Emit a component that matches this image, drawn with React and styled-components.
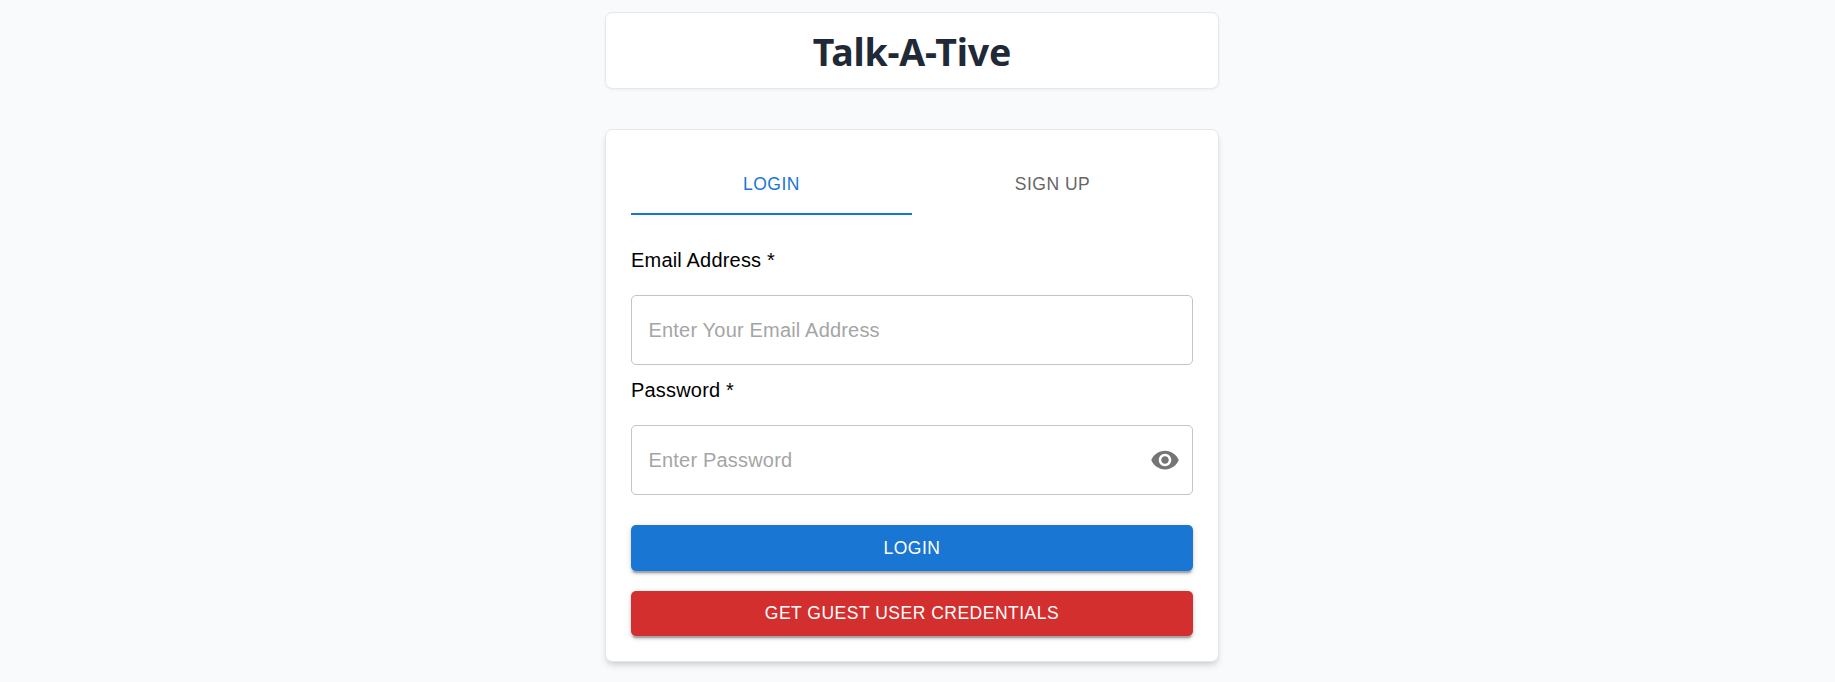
import React, { useState } from "react";
import styled, { createGlobalStyle } from "styled-components";

const GlobalStyle = createGlobalStyle`
  * { box-sizing: border-box; }
  body {
    margin: 0;
    background: #f9fafc;
    font-family: "Liberation Sans", Arial, sans-serif;
    overflow: hidden;
  }
`;

const Page = styled.main`
  min-height: 682px;
  padding: 12px 0 20px 605px;
`;

const Column = styled.div`
  width: 614px;
  display: flex;
  flex-direction: column;
  gap: 40px;
`;

const Panel = styled.section`
  background: #fff;
  border: 1px solid #e5e7eb;
  border-radius: 7.5px;
`;

const Header = styled(Panel)`
  height: 77px;
  display: flex;
  align-items: center;
  justify-content: center;
  box-shadow: 0 1px 3px rgba(0, 0, 0, 0.05);
`;

const Title = styled.h1`
  margin: 0;
  padding-top: 2px;
  font: 700 37.5px/45px "Noto Sans", "Open Sans", sans-serif;
  letter-spacing: -0.2px;
  color: #1f2937;
`;

const Card = styled(Panel)`
  height: 533px;
  padding: 25px;
  box-shadow: 0 5px 7.5px -1px rgba(0, 0, 0, 0.1), 0 2.5px 5px -2px rgba(0, 0, 0, 0.1);
`;

const Tabs = styled.div`
  display: flex;
  height: 60px;
`;

const Tab = styled.button`
  flex: 1;
  padding: 0 0 1px;
  border: 0;
  border-bottom: 2px solid ${(p) => (p.$active ? "#1976d2" : "transparent")};
  background: none;
  color: ${(p) => (p.$active ? "#1976d2" : "#666")};
  font: 400 17.5px/22px "Liberation Sans", Arial, sans-serif;
  letter-spacing: 0.02857em;
  text-transform: uppercase;
`;

const Form = styled.form`
  display: flex;
  flex-direction: column;
  padding-top: 30px;
`;

const Field = styled.div`
  display: flex;
  flex-direction: column;
  gap: 20px;
  margin-bottom: 10px;
`;

const Label = styled.label`
  font-size: 20px;
  line-height: 30px;
  letter-spacing: 0.00938em;
  color: #000;
`;

const InputBox = styled.div`
  height: 70px;
  display: flex;
  align-items: center;
  padding: 0 12px 0 16.5px;
  border: 1px solid #c4c4c4;
  border-radius: 5px;
`;

const Input = styled.input`
  flex: 1;
  min-width: 0;
  height: 29px;
  padding: 0;
  border: 0;
  outline: 0;
  background: none;
  font: 400 20px/29px "Liberation Sans", Arial, sans-serif;
  letter-spacing: 0.00938em;

  &::placeholder {
    color: #a5a5a5;
    opacity: 1;
  }
`;

const IconButton = styled.button`
  display: flex;
  padding: 0;
  border: 0;
  background: none;
  color: #757575;
`;

const Actions = styled.div`
  display: flex;
  flex-direction: column;
  gap: 20px;
  padding-top: 20px;
`;

const Button = styled.button`
  height: ${(p) => p.$height}px;
  padding: 0 0 ${(p) => p.$height % 2}px;
  border: 0;
  border-radius: 5px;
  background: ${(p) => p.$color};
  color: #fff;
  font: 400 17.5px/30px "Liberation Sans", Arial, sans-serif;
  letter-spacing: 0.02857em;
  text-transform: uppercase;
  box-shadow: 0 3.75px 1.25px -2.5px rgba(0, 0, 0, 0.2),
    0 2.5px 2.5px 0 rgba(0, 0, 0, 0.14), 0 1.25px 6.25px 0 rgba(0, 0, 0, 0.12);
`;

function EyeIcon() {
  return (
    <svg width="30" height="30" viewBox="0 0 24 24" fill="currentColor" aria-hidden="true">
      <path d="M12 4.5C7 4.5 2.73 7.61 1 12c1.73 4.39 6 7.5 11 7.5s9.27-3.11 11-7.5c-1.73-4.39-6-7.5-11-7.5M12 17c-2.76 0-5-2.24-5-5s2.24-5 5-5 5 2.24 5 5-2.24 5-5 5m0-8c-1.66 0-3 1.34-3 3s1.34 3 3 3 3-1.34 3-3-1.34-3-3-3" />
    </svg>
  );
}

export default function App() {
  const [tab, setTab] = useState("login");
  const [visible, setVisible] = useState(false);

  return (
    <Page>
      <GlobalStyle />
      <Column>
        <Header>
          <Title>Talk-A-Tive</Title>
        </Header>
        <Card>
          <Tabs>
            <Tab $active={tab === "login"} onClick={() => setTab("login")}>Login</Tab>
            <Tab $active={tab === "signup"} onClick={() => setTab("signup")}>Sign Up</Tab>
          </Tabs>
          <Form onSubmit={(e) => e.preventDefault()}>
            <Field>
              <Label htmlFor="email">Email Address *</Label>
              <InputBox>
                <Input id="email" type="email" placeholder="Enter Your Email Address" />
              </InputBox>
            </Field>
            <Field>
              <Label htmlFor="password">Password *</Label>
              <InputBox>
                <Input id="password" type={visible ? "text" : "password"} placeholder="Enter Password" />
                <IconButton type="button" aria-label="Show password" onClick={() => setVisible(!visible)}>
                  <EyeIcon />
                </IconButton>
              </InputBox>
            </Field>
            <Actions>
              <Button type="submit" $height={46} $color="#1976d2">Login</Button>
              <Button type="button" $height={45} $color="#d32f2f">Get Guest User Credentials</Button>
            </Actions>
          </Form>
        </Card>
      </Column>
    </Page>
  );
}
